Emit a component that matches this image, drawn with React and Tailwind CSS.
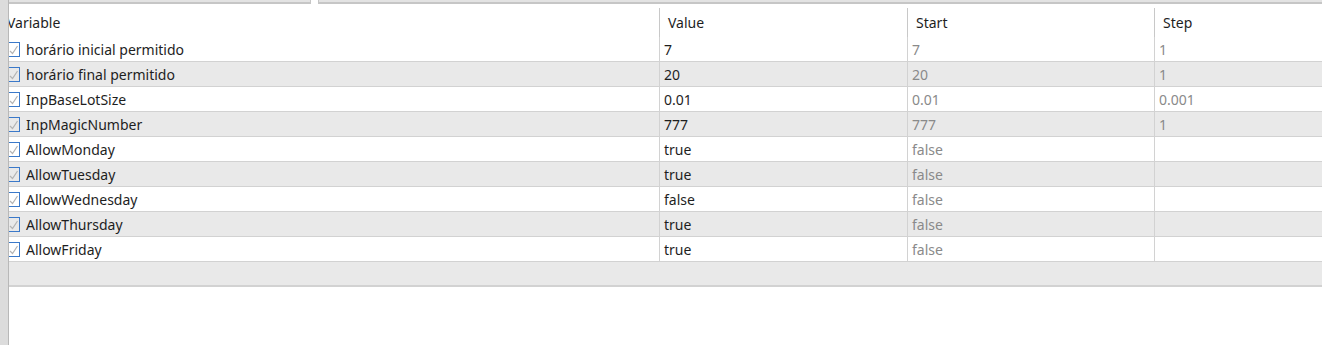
import React from 'react';

const rows = [
  { name: 'horário inicial permitido', value: '7', start: '7', step: '1' },
  { name: 'horário final permitido', value: '20', start: '20', step: '1' },
  { name: 'InpBaseLotSize', value: '0.01', start: '0.01', step: '0.001' },
  { name: 'InpMagicNumber', value: '777', start: '777', step: '1' },
  { name: 'AllowMonday', value: 'true', start: 'false', step: '' },
  { name: 'AllowTuesday', value: 'true', start: 'false', step: '' },
  { name: 'AllowWednesday', value: 'false', start: 'false', step: '' },
  { name: 'AllowThursday', value: 'true', start: 'false', step: '' },
  { name: 'AllowFriday', value: 'true', start: 'false', step: '' },
];

const CheckBox = () => (
  <span className="relative w-[11px] h-[15px] shrink-0 border-t border-r border-b border-[#3b79c9]">
    <svg width="10" height="13" viewBox="0 0 10 13" className="absolute left-0 top-0">
      <path d="M1 8 L3.5 10.5 L8.5 3" fill="none" stroke="#b4b4b4" strokeWidth="1.2" />
    </svg>
  </span>
);

export default function App() {
  return (
    <div
      className="flex h-[345px] w-[1322px] overflow-hidden bg-white text-[14px] text-[#1e1e1e]"
      style={{ fontFamily: '"Noto Sans", "Open Sans", sans-serif' }}
    >
      <div className="relative z-10 w-[9px] shrink-0 bg-[#dcdcdc] border-r border-[#b8b8b8]" />
      <div className="flex-1 flex flex-col min-w-0">
        {/* top tab strip */}
        <div className="flex h-[4px] shrink-0 gap-[7px]">
          <div className="w-[302px] bg-[#e3e3e3] border-b-2 border-r border-[#c6c6c6]" />
          <div className="flex-1 bg-[#e3e3e3] border-b-2 border-l border-[#c6c6c6]" />
        </div>
        {/* header */}
        <div className="flex h-[33px] shrink-0 items-stretch pt-[4px]">
          <div className="w-[650px] shrink-0 flex items-center -ml-[2px] pl-0">Variable</div>
          <div className="w-[248px] shrink-0 flex items-center border-l border-[#c8c8c8] pl-[8px] ml-[2px]">Value</div>
          <div className="w-[247px] shrink-0 flex items-center border-l border-[#c8c8c8] pl-[8px]">Start</div>
          <div className="flex-1 flex items-center border-l border-[#c8c8c8] pl-[8px]">Step</div>
        </div>
        {rows.map((r, i) => (
          <div
            key={r.name}
            className={`flex h-[25px] shrink-0 border-b border-[#d2d2d2] ${i % 2 ? 'bg-[#e9e9e9]' : 'bg-white'}`}
          >
            <div className="w-[650px] shrink-0 flex items-center gap-[6px] pt-[1px]">
              <CheckBox />
              <span>{r.name}</span>
            </div>
            <div className="w-[248px] shrink-0 flex items-center border-l border-[#d2d2d2] pl-[4px] pt-[1px]">{r.value}</div>
            <div className="w-[247px] shrink-0 flex items-center border-l border-[#d2d2d2] pl-[4px] pt-[1px] text-[#8a8a8a]">{r.start}</div>
            <div className="flex-1 flex items-center border-l border-[#d2d2d2] pl-[4px] pt-[1px] text-[#8a8a8a]">{r.step}</div>
          </div>
        ))}
        <div className="h-[25px] shrink-0 bg-[#e9e9e9] border-b-2 border-[#d2d2d2]" />
        <div className="flex-1 bg-white" />
      </div>
    </div>
  );
}
